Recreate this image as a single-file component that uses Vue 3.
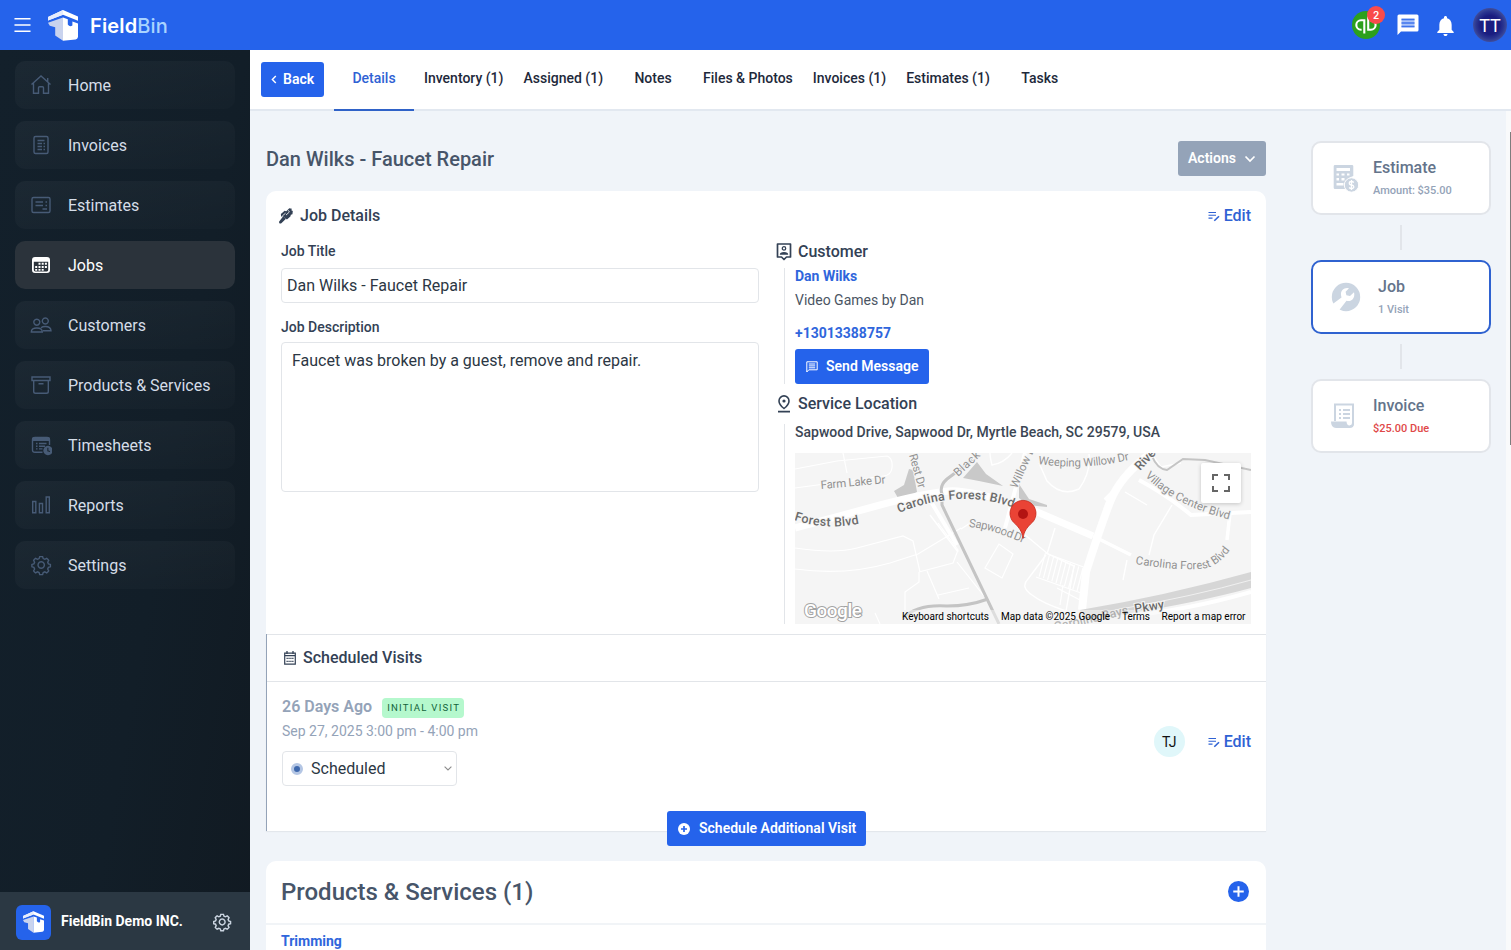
<template>
  <div class="app-shell">
    <header class="topbar">
      <svg class="menu-icon" viewBox="0 0 18 16"><path d="M0.5 1.5h17M0.5 8h17M0.5 14.5h17" /></svg>
      <svg class="brand-logo" viewBox="0 0 30 31">
        <path d="M0 7 15 0l15 6.500v4.200L15 4.800 0 10.500z" fill="#fff" />
        <path d="M0 7 15 0v4.800L0 10.500z" fill="#e6ecfc" />
        <path d="M0 12.800 15 7.500v23.300L7.200 25.500v-8.300L1.800 15.800z" fill="#c9d3ee" />
        <path d="M15 7.500 19.800 9.200v5.400q2 2.600 4.600.8V11.400L30 13.500v13.500q-.6 2.200-2.400 2.600L15 30.800z" fill="#fff" />
      </svg>
      <div class="brand-name"><span>Field</span><span class="brand-bin">Bin</span></div>
      <div class="top-actions">
        <div class="qb">
          <svg viewBox="0 0 28 28">
            <circle cx="14" cy="14" r="14" fill="#2ca01c" />
            <path d="M11.300 9.300H9a4.700 4.700 0 0 0 0 9.400h.6M12.300 8.200v14.300M16.200 5.500v13.200h2.700a4.700 4.700 0 0 0 0-9.400h-.6" fill="none" stroke="#fff" stroke-width="2.100" />
          </svg>
          <span class="qb-badge">2</span>
        </div>
        <svg class="chat" viewBox="0 0 22 22">
          <path d="M2 0.500h18q1.500 0 1.500 1.500v14q0 1.500-1.500 1.500H4L0.500 21V2q0-1.500 1.500-1.500z" fill="#fff" />
          <path d="M4.500 4.500h13v9h-13z" fill="#a9c2f8" />
          <path d="M4.500 5.500h13M4.500 9h13M4.500 12.500h13" stroke="#3f74ec" stroke-width="1.500" />
        </svg>
        <svg class="bell" viewBox="4 2.500 16 19.500"><path fill="#fff" d="M12 22c1.100 0 2-.9 2-2h-4c0 1.100.89 2 2 2zm6-6v-5c0-3.070-1.640-5.640-4.500-6.320V4c0-.83-.67-1.500-1.500-1.500s-1.500.67-1.500 1.500v.68C7.630 5.360 6 7.920 6 11v5l-2 2v1h16v-1l-2-2z" /></svg>
        <div class="user-avatar">TT</div>
      </div>
    </header>

    <div class="body">
      <aside class="sidebar">
        <nav class="nav">
          <a v-for="item in navItems" :key="item.label" class="nav-item" :class="{ active: item.active }">
            <svg class="nav-icon" viewBox="0 0 22 22">
              <path v-if="item.stroke" :d="item.stroke" class="line" />
              <path v-if="item.fill" :d="item.fill" class="solid" fill-rule="evenodd" />
            </svg>
            <span>{{ item.label }}</span>
          </a>
        </nav>
        <div class="org">
          <div class="org-logo">
            <svg viewBox="0 0 30 31">
              <path d="M0 7 15 0l15 6.500v4.200L15 4.800 0 10.500z" fill="#fff" />
              <path d="M0 7 15 0v4.800L0 10.500z" fill="#e6ecfc" />
              <path d="M0 12.800 15 7.500v23.300L7.200 25.500v-8.300L1.800 15.800z" fill="#c9d3ee" />
              <path d="M15 7.500 19.800 9.200v5.400q2 2.600 4.600.8V11.400L30 13.500v13.500q-.6 2.200-2.400 2.600L15 30.800z" fill="#fff" />
            </svg>
          </div>
          <span class="org-name">FieldBin Demo INC.</span>
          <svg class="org-gear" viewBox="0 0 22 22"><path :d="gear" /></svg>
        </div>
      </aside>

      <main class="main">
        <div class="tabbar">
          <button class="btn back">
            <svg viewBox="0 0 6 10"><path d="M5 1 1.200 5 5 9" /></svg>
            Back
          </button>
          <div class="tabs">
            <a v-for="(tab, i) in tabs" :key="tab" class="tab" :class="{ current: i === 0 }">{{ tab }}</a>
          </div>
        </div>

        <div class="content">
          <div class="column">
            <div class="title-row">
              <h1>Dan Wilks - Faucet Repair</h1>
              <button class="btn actions">
                Actions
                <svg viewBox="0 0 12 8"><path d="M1.500 1.500 6 6l4.500-4.500" /></svg>
              </button>
            </div>

            <section class="card job-card">
              <div class="job-head">
                <svg class="tools" viewBox="0 0 15 17">
                  <path d="M.8 16.500q-1-.6-.6-2L4.500 8.800l3 2.600-5 4.800q-.8.600-1.700.3z" />
                  <path d="M2 6.300 6 3l1.800.3L11 .3l2.800.5-.6 1.500 1.600.8-.4 3.400-1.700.6-.5 2-3.700 3.200-4.300-3.600L2.200 9z" />
                  <path d="M3.500 8.500 7 5.500M7.500 7.500 11 4.300M9.500 2.500l1.800 1.300" stroke="#fff" stroke-width=".9" fill="none" />
                </svg>
                <h2>Job Details</h2>
                <a class="edit">
                  <svg viewBox="0 0 12 11"><path d="M0.500 1.500h7.500M0.500 4.300h7.500M0.500 7.100h4" /><path d="M6.300 9.800 11 5.200" class="pen" /></svg>
                  Edit
                </a>
              </div>
              <div class="job-body">
                <div class="job-form">
                  <label>Job Title</label>
                  <div class="input">Dan Wilks - Faucet Repair</div>
                  <label class="desc-label">Job Description</label>
                  <div class="textarea">Faucet was broken by a guest, remove and repair.</div>
                </div>
                <div class="job-info">
                  <div class="info-head">
                    <svg viewBox="0 0 16 18">
                      <path d="M1.500 1h13v13H10.500L8 16.500 5.500 14h-4z" fill="none" stroke="#334155" stroke-width="1.700" stroke-linejoin="round" />
                      <circle cx="8" cy="5.400" r="1.700" fill="none" stroke="#334155" stroke-width="1.300" />
                      <path d="M3.800 11.800q0-2.800 4.200-2.800t4.200 2.800z" fill="#334155" />
                    </svg>
                    <h2>Customer</h2>
                  </div>
                  <div class="info-block customer">
                    <a class="link name">Dan Wilks</a>
                    <span class="company">Video Games by Dan</span>
                    <a class="link phone">+13013388757</a>
                    <button class="btn send">
                      <svg viewBox="0 0 12 12"><path d="M.8 11V.8h10.400v8H2.800z" /><path d="M2.800 3h6.400M2.800 4.900h6.400M2.800 6.800h6.400" /></svg>
                      Send Message
                    </button>
                  </div>
                  <div class="info-head location-head">
                    <svg viewBox="0 0 16 18">
                      <path d="M8 13.500Q3 9.500 3 5.900a5 5 0 0 1 10 0Q13 9.500 8 13.500zM2 16.600h12" fill="none" stroke="#334155" stroke-width="1.600" />
                      <circle cx="8" cy="6" r="1.600" fill="#334155" />
                    </svg>
                    <h2>Service Location</h2>
                  </div>
                  <div class="info-block location">
                    <span class="address">Sapwood Drive, Sapwood Dr, Myrtle Beach, SC 29579, USA</span>
                    <div class="map">
                      <svg viewBox="0 0 456 171">
                        <rect width="456" height="171" fill="#f5f5f5" />
                        <!-- parks and ponds -->
                        <g fill="#c9c9c9">
                          <path d="M99 38l10-6 5-16 4 1 4 22-7 4-12 2z" />
                          <path d="M168 25l14-16 9 12 17 12-24-5z" />
                          <path d="M224 31l10 15 18 6v2l-20-2-8-7z" />
                        </g>
                        <!-- streets -->
                        <g fill="none" stroke="#fff">
                          <path d="M0 16 42 8l50-5q6 2 5 12-1 7-8 8L0 35M48 0l4 20M0 95q40 6 62 0l46-12 10 5 7 31M0 116q50 7 95-6l28-9 43-26M124 119l34-9 5-13-20-27M132 118l12 28M143 142l31-7M124 119v10l-14 10v18M162 109l27 34M204 91l-14 24 17 10 11-24zM80 160l5 11" stroke-width="1.200" />
                          <path d="M135 62 163 99M166 76 180 67M217 0q-8 10-20 12-2-8-2-12M244 10l8 18q14 16 32 8 12-16 10-35M330 39l22 13M377 52l-18 30-5 20M356 0l10 14 20-4M332 107l-4 20M260 75l-8 26M229 81l24 20 26 12-8 45q-24-8-34-16-12-8-4-16l18-24" stroke-width="1.400" />
                          <path d="M0 75Q40 64 85 52T153 38 240 58l58 25" stroke-width="7" />
                          <path d="M298 83l38 19M432 87l3-27" stroke-width="3.500" />
                          <path d="M356 0Q325 23 315 49T291 119L287 157" stroke-width="8" />
                          <path d="M310 47 322 35M344 27Q372 42 396 62l60-3M330 163q60-5 126-24" stroke-width="4" />
                          <path d="M230 0 210 75M132 42l30 50" stroke-width="4" />
                        </g>
                        <g fill="none" stroke="#fff" stroke-width="1.200">
                          <path v-for="n in 10" :key="n" :d="`M${246 + n * 4.2} ${99 + n * 1.6}l-6 23`" />
                          <path d="M250 100l44 16M241 124l45 16M262 135l23 12M268 132l-3 20" />
                        </g>
                        <!-- railway and highway -->
                        <g fill="none" stroke="#c4c4c4">
                          <path d="M183 3 152 26q-8 7-5 15v11L204 171" stroke-width="3" />
                          <path d="M108 165q14-14 44-12 22 0 41-7" stroke-width="3" />
                          <path d="M357 3q5 13 15 14l16-11 22 1 46 10" stroke-width="2" />
                        </g>
                        <path d="M285 157Q370 143 456 119v16Q400 150 330 161l-42 6z" fill="#d6d6d6" />
                        <path d="M320 157Q400 143 456 127" fill="none" stroke="#f0f0f0" stroke-width="1" />
                        <defs>
                          <path id="st-forest" d="M-1 67Q33 78 67 70" />
                          <path id="st-carolina" d="M104 60Q166 34 222 56" />
                          <path id="st-sapwood" d="M174 74q20 1 59 18" />
                          <path id="st-weeping" d="M243 11q48 7 95-5" />
                          <path id="st-village" d="M350 23Q378 53 440 68" />
                          <path id="st-carolina2" d="M340 111q52 8 72 4 16-5 27-24" />
                        </defs>
                        <g class="road-label">
                          <text transform="translate(26 36) rotate(-5)" textLength="65">Farm Lake Dr</text>
                          <text transform="translate(114 2) rotate(74)" textLength="35">Rest Dr</text>
                          <text transform="translate(163 24) rotate(-43)" textLength="31">Black</text>
                          <text transform="translate(222 36) rotate(-66)">Willow Dr</text>
                          <text><textPath href="#st-sapwood" textLength="57">Sapwood Dr</textPath></text>
                          <text><textPath href="#st-weeping" textLength="92">Weeping Willow Dr</textPath></text>
                          <text><textPath href="#st-village" textLength="96">Village Center Blvd</textPath></text>
                          <text><textPath href="#st-carolina2" textLength="102">Carolina Forest Blvd</textPath></text>
                        </g>
                        <g class="road-label major">
                          <text><textPath href="#st-forest" textLength="66">Forest Blvd</textPath></text>
                          <text><textPath href="#st-carolina" textLength="117">Carolina Forest Blvd</textPath></text>
                          <text transform="translate(345 18) rotate(-47)">River</text>
                        </g>
                        <text x="9" y="163.500" class="google" textLength="58">Google</text>
                        <rect x="104" y="157" width="352" height="14" fill="#f5f5f5" opacity=".5" />
                        <g class="road-label major">
                          <text transform="translate(260 178) rotate(-13)" textLength="76" opacity=".45">Carolina Bays</text>
                          <text transform="translate(340 160) rotate(-9)" textLength="30">Pkwy</text>
                        </g>
                        <g class="map-foot">
                          <text x="107" y="167" textLength="87">Keyboard shortcuts</text>
                          <text x="206" y="167" textLength="109">Map data ©2025 Google</text>
                          <text x="327" y="167" textLength="28">Terms</text>
                          <text x="366.500" y="167" textLength="84">Report a map error</text>
                        </g>
                        <path d="M228 85.500c-1.200-8-4-10.500-7.500-14.500a13 13 0 1 1 15 0c-3.500 4-6.300 6.500-7.500 14.500z" fill="#ea4335" stroke="#c5291c" stroke-width=".8" />
                        <circle cx="228" cy="61" r="5" fill="#b31412" />
                      </svg>
                      <div class="fullscreen">
                        <svg viewBox="0 0 18 18"><path d="M1 6V1h5M12 1h5v5M17 12v5h-5M6 17H1v-5" /></svg>
                      </div>
                    </div>
                  </div>
                </div>
              </div>
            </section>

            <section class="visits">
              <div class="visits-head">
                <svg viewBox="0 0 12 14">
                  <path d="M.7 2.200h10.600v11H.7zM.7 4.600h10.600" fill="none" stroke="#334155" stroke-width="1.200" />
                  <path d="M3 0v3M9 0v3" stroke="#334155" stroke-width="1.300" />
                  <path d="M2.500 7.400h7M2.500 10.400h7" stroke="#334155" stroke-width="1.300" stroke-dasharray="1.300 .6" />
                </svg>
                <h2>Scheduled Visits</h2>
              </div>
              <div class="visit">
                <div class="visit-info">
                  <div class="visit-title">
                    <strong>26 Days Ago</strong>
                    <span class="badge">INITIAL VISIT</span>
                  </div>
                  <span class="visit-date">Sep 27, 2025 3:00 pm - 4:00 pm</span>
                  <div class="select">
                    <span class="dot"></span>
                    <span>Scheduled</span>
                    <svg viewBox="0 0 8 5"><path d="M.6.600 4 4 7.400.600" /></svg>
                  </div>
                </div>
                <div class="visit-side">
                  <div class="tech">TJ</div>
                  <a class="edit">
                    <svg viewBox="0 0 12 11"><path d="M0.500 1.500h7.500M0.500 4.300h7.500M0.500 7.100h4" /><path d="M6.300 9.800 11 5.200" class="pen" /></svg>
                    Edit
                  </a>
                </div>
              </div>
              <button class="btn schedule">
                <svg viewBox="0 0 12 12"><circle cx="6" cy="6" r="6" fill="#fff" /><path d="M6 3v6M3 6h6" stroke="#2563eb" stroke-width="1.700" /></svg>
                Schedule Additional Visit
              </button>
            </section>

            <section class="card products">
              <div class="products-head">
                <h3>Products &amp; Services (1)</h3>
                <svg viewBox="0 0 20 20"><circle cx="10" cy="10" r="10" fill="#2563eb" /><path d="M10 5v10M5 10h10" stroke="#fff" stroke-width="1.900" /></svg>
              </div>
              <a class="link product-link">Trimming</a>
            </section>
          </div>

          <div class="flow">
            <div class="step">
              <svg viewBox="0 0 30 30">
                <path fill="#cbd5e1" fill-rule="evenodd" d="M4 2h17q1.300 0 1.300 1.300V13q-7 2-7 8l1 5H4q-1.300 0-1.300-1.300V3.300Q2.700 2 4 2zM5.500 5v3h13.500V5zM5.500 10.500v2h2.500v-2zm5 0v2h3v-2zm5.500 0v2h2.500v-2zM5.500 15v2.500h2.500V15zm5 0v2.500h3V15zM5.500 20v2.500h7V20z" />
                <circle cx="20.500" cy="22" r="7.200" fill="#cbd5e1" stroke="#fff" stroke-width="1" />
                <path d="M22.800 19.500q-1-1-2.300-1-2.200 0-2.200 1.700t2.200 1.800 2.300 1.800-2.300 1.700q-1.500 0-2.400-1M20.500 17v10" fill="none" stroke="#fff" stroke-width="1.300" />
              </svg>
              <div class="step-text"><b>Estimate</b><small>Amount: $35.00</small></div>
            </div>
            <div class="link-line"></div>
            <div class="step job">
              <svg viewBox="0 0 30 30">
                <circle cx="15" cy="15" r="14.200" fill="#cbd5e1" />
                <path d="M-1 24 10.500 15.500Q8.500 9 13.500 6.500q2.500-1 4.500-.2L14.600 9.700l.8 3.600 3.600.8 4-3.800q1.300 5.700-3 8.200-2 1-4.500.3L6 31z" fill="#fff" />
              </svg>
              <div class="step-text"><b>Job</b><small>1 Visit</small></div>
            </div>
            <div class="link-line"></div>
            <div class="step">
              <svg viewBox="0 0 30 30">
                <path d="M4 20V3.500h18V22q0 3-3 3.500" fill="none" stroke="#cbd5e1" stroke-width="2" />
                <path d="M0 20.500h15.500q.3 4 3 4 3 0 3.500-3l1 1q0 4.500-4.500 4.500H5q-5 0-5-6.500z" fill="#cbd5e1" />
                <path d="M8 9h2M8 13h2M8 17h2M12 9h7M12 13h7M12 17h7" stroke="#cbd5e1" stroke-width="1.800" />
              </svg>
              <div class="step-text"><b>Invoice</b><small class="due">$25.00 Due</small></div>
            </div>
          </div>
          <div class="scroll-track"><div class="scroll-thumb"></div></div>
        </div>
      </main>
    </div>
  </div>
</template>

<script setup>
const gear =
  'M12.600 2.600l.6 2 1.600.7 1.900-1q1.200.8 2 2l-1 1.900.7 1.600 2 .6v2.400l-2 .6-.7 1.600 1 1.900q-.8 1.200-2 2l-1.900-1-1.600.7-.6 2h-2.900l-.6-2-1.600-.7-1.900 1q-1.200-.8-2-2l1-1.900-.7-1.600-2-.6v-2.400l2-.6.7-1.600-1-1.900q.8-1.200 2-2l1.900 1 1.600-.7.6-2zM11.200 7.800a3.200 3.200 0 1 0 .01 0z'

const navItems = [
  { label: 'Home', stroke: 'M1.500 10.500 11 2l9.500 8.500M3.500 9v10.200h5v-5.500q0-1 1-1h3q1 0 1 1v5.500h5V9M17.700 7.500V4' },
  { label: 'Invoices', stroke: 'M5.500 2.500h11q1.500 0 1.500 1.500v14q0 1.500-1.500 1.500h-11Q4 19.500 4 18V4q0-1.500 1.500-1.500zM7.500 6.500h7M7.500 9.500h4.500M13.500 9.500h1.500M7.500 12.500h4.500M13.500 12.500h1.500M7.500 15.500h4.500M13.500 15.500h1.500' },
  { label: 'Estimates', stroke: 'M3.500 3.500h15Q20 3.500 20 5v12q0 1.500-1.500 1.500h-15Q2 18.500 2 17V5q0-1.500 1.500-1.500zM5.500 8h7.500M5.500 11.500h7.500M15.500 8h1.500M15.500 11.500h1.500M12.500 15h4.500' },
  {
    label: 'Jobs',
    active: true,
    fill: 'M5 3h12q3 0 3 3v10q0 3-3 3H5q-3 0-3-3V6q0-3 3-3zM3.800 7.800V16q0 1.400 1.400 1.400h11.600q1.400 0 1.400-1.400V7.800zM8.500 8.800h2v2h-2zm3.200 0h2v2h-2zm3.200 0h2v2h-2zM5.200 12h2v2h-2zm3.300 0h2v2h-2zm3.200 0h2v2h-2zm3.200 0h2v2h-2zM5.200 15h2v1.800h-2zm3.300 0h2v1.800h-2zm3.200 0h2v1.800h-2z'
  },
  { label: 'Customers', stroke: 'M6.800 5.200a3 3 0 1 0 .01 0zM15.300 4a3 3 0 1 0 .01 0zM1.300 18q0-4 5.500-4t5.500 4zM11 13.800q1.500-1.300 4.300-1.300 5.500 0 5.700 4.300h-8' },
  { label: 'Products & Services', stroke: 'M2 3h18v3.500H2zM3.700 6.500v11q0 1.800 1.800 1.800h11q1.800 0 1.800-1.800v-11M8.500 9.800h5' },
  {
    label: 'Timesheets',
    stroke: 'M12.500 18.300H5Q2.500 18.300 2.500 16V6Q2.500 3.500 5 3.500h12Q19.500 3.500 19.500 6v5M6 9.500h1.500M9 9.500h7.500M6 12.200h1.500M9 12.200h6M6 14.900h1.500M9 14.900h3.500',
    fill: 'M2 7V5q0-2 2.500-2h13Q20 3 20 5v2zM18 11.800a4.700 4.700 0 1 1-.01 0zM17.300 13.800v3.400l2.600.8.2-1-1.700-.6v-2.600z'
  },
  { label: 'Reports', stroke: 'M2.700 7.500h3.100v11.200H2.700zM9.400 9.500h3.100v9.200H9.400zM16.200 3h3.100v15.700h-3.100z' },
  { label: 'Settings', stroke: gear }
]

const tabs = ['Details', 'Inventory (1)', 'Assigned (1)', 'Notes', 'Files & Photos', 'Invoices (1)', 'Estimates (1)', 'Tasks']
</script>

<style>
body {
  margin: 0;
  overflow: hidden;
}
</style>

<style scoped>
* {
  box-sizing: border-box;
}

.app-shell {
  height: 950px;
  display: flex;
  flex-direction: column;
  font-family: Roboto, "Liberation Sans", sans-serif;
  color: #334155;
  background: #f0f4f9;
}

svg {
  display: block;
  flex: none;
}

h1, h2, h3 {
  margin: 0;
  font-weight: 500;
}

.topbar {
  height: 50px;
  flex: none;
  display: flex;
  align-items: center;
  padding: 0 5px 0 14px;
  background: #2563eb;
}

.menu-icon {
  width: 17px;
  height: 16px;
  fill: none;
  stroke: #fff;
  stroke-width: 1.6;
}

.brand-logo {
  width: 30px;
  height: 31px;
  margin-left: 17px;
}

.brand-name {
  margin-left: 12px;
  padding-top: 2px;
  font: 600 20px/30px Inter, sans-serif;
  letter-spacing: 0.15px;
  color: #fff;
}

.brand-bin {
  font-weight: 500;
  color: #a9d3ff;
}

.top-actions {
  margin-left: auto;
  display: flex;
  align-items: center;
}

.qb {
  position: relative;
  margin-right: 17px;
}

.qb svg {
  width: 28px;
  height: 28px;
}

.qb-badge {
  position: absolute;
  top: -5px;
  right: -5px;
  width: 18px;
  height: 18px;
  border-radius: 50%;
  background: #f94b4b;
  color: #fff;
  font: 600 10px/18px Inter, sans-serif;
  text-align: center;
}

.chat {
  width: 22px;
  height: 22px;
  margin-right: 18px;
}

.bell {
  width: 17px;
  height: 20px;
  margin: 1px 19px 0 0;
}

.user-avatar {
  width: 34px;
  height: 34px;
  margin-right: -1px;
  border-radius: 50%;
  background: radial-gradient(circle closest-side, #1a1d80 55%, #2a3590 80%, #3f4d9c 100%);
  color: #fff;
  font-size: 18px;
  line-height: 35px;
  text-align: center;
}

.body {
  flex: 1;
  min-height: 0;
  display: flex;
}

.sidebar {
  width: 250px;
  flex: none;
  display: flex;
  flex-direction: column;
  justify-content: space-between;
  background: linear-gradient(100deg, #13202b 0%, #121e28 60%, #111a22 100%);
}

.nav {
  padding: 11px 15px 0;
  display: flex;
  flex-direction: column;
  gap: 12px;
}

.nav-item {
  height: 48px;
  display: flex;
  align-items: center;
  gap: 16px;
  padding-left: 15px;
  border-radius: 10px;
  background: linear-gradient(170deg, rgba(255, 255, 255, 0.038), rgba(255, 255, 255, 0.012));
  color: #d5dde8;
  font-size: 16px;
}

.nav-item.active {
  background: #2b333b;
  color: #fff;
}

.nav-icon {
  width: 22px;
  height: 22px;
}

.nav-icon .line {
  fill: none;
  stroke: #475b76;
  stroke-width: 1.4;
}

.nav-icon .solid {
  fill: #475b76;
}

.active .solid {
  fill: #fff;
}

.org {
  height: 58px;
  display: flex;
  align-items: center;
  padding: 2px 18px 0 16px;
  background: #2b3843;
  color: #fff;
}

.org-logo {
  width: 35px;
  height: 35px;
  display: flex;
  align-items: center;
  justify-content: center;
  border-radius: 6px;
  background: #2563eb;
}

.org-logo svg {
  width: 21px;
  height: 22px;
}

.org-name {
  margin: 0 0 2px 10px;
  font-size: 14px;
  font-weight: 700;
}

.org-gear {
  width: 20px;
  height: 20px;
  margin-left: auto;
  fill: none;
  stroke: #cbd5e1;
  stroke-width: 1.6;
}

.main {
  flex: 1;
  min-width: 0;
  display: flex;
  flex-direction: column;
}

.tabbar {
  height: 61px;
  flex: none;
  display: flex;
  align-items: flex-start;
  background: #fff;
  border-bottom: 2px solid #e2e8f0;
}

.btn {
  height: 35px;
  display: flex;
  align-items: center;
  border: 0;
  border-radius: 3px;
  background: #2563eb;
  color: #fff;
  font: 600 14px Roboto, "Liberation Sans", sans-serif;
  white-space: nowrap;
}

.back {
  width: 63px;
  margin: 12px 10px 0 11px;
  padding: 0 0 2px 10px;
  gap: 6px;
}

.back svg {
  width: 6px;
  height: 9px;
  margin-top: 1px;
  fill: none;
  stroke: #fff;
  stroke-width: 1.6;
}

.tabs {
  display: flex;
}

.tab {
  min-width: 80px;
  height: 61px;
  padding: 0 10px;
  line-height: 56px;
  font-size: 14px;
  font-weight: 500;
  text-align: center;
  color: #1e293b;
  white-space: nowrap;
}

.tab.current {
  color: #2f62d4;
  border-bottom: 2px solid #2f62c8;
}

.content {
  flex: 1;
  min-height: 0;
  display: flex;
  align-items: flex-start;
  overflow: hidden;
}

.column {
  width: 1000px;
  flex: none;
  margin: 30px 0 0 16px;
}

.title-row {
  height: 35px;
  display: flex;
  align-items: center;
  justify-content: space-between;
  margin-bottom: 15px;
}

h1 {
  font-size: 20px;
  color: #475569;
}

.actions {
  width: 88px;
  padding: 0 10px 2px;
  justify-content: space-between;
  background: #94a3b8;
}

.actions svg {
  width: 12px;
  height: 8px;
  margin-top: 3px;
  fill: none;
  stroke: #fff;
  stroke-width: 1.7;
}

.card {
  background: #fff;
  border-radius: 10px 10px 0 0;
}

.job-card {
  height: 443px;
}

.job-head {
  height: 49px;
  display: flex;
  align-items: center;
  padding: 0 15px 0 13px;
}

h2 {
  font-size: 16px;
  line-height: 22px;
}

.tools {
  width: 14px;
  height: 16px;
  margin: 1px 7px 0 0;
  fill: #334155;
}

.edit {
  margin-left: auto;
  display: flex;
  align-items: center;
  gap: 4px;
  color: #2f62d4;
  font-size: 16px;
  font-weight: 500;
}

.edit svg {
  width: 12px;
  height: 11px;
  margin-top: 2px;
  fill: none;
  stroke: #2f62d4;
  stroke-width: 1.1;
}

.edit .pen {
  stroke-width: 1.6;
}

.job-body {
  display: flex;
  padding-left: 15px;
}

.job-form {
  width: 478px;
  margin-right: 17px;
}

.job-form label {
  display: block;
  height: 22px;
  line-height: 22px;
  font-size: 14px;
  font-weight: 500;
}

.input {
  height: 35px;
  margin-top: 6px;
  padding-left: 5px;
  line-height: 33px;
  border: 1px solid #e2e5e9;
  border-radius: 4px;
  font-size: 16px;
  color: #2c3744;
}

.desc-label {
  margin-top: 13px;
}

.textarea {
  height: 150px;
  margin-top: 4px;
  padding: 7px 10px;
  line-height: 22px;
  border: 1px solid #e2e5e9;
  border-radius: 4px;
  font-size: 16px;
  color: #2c3744;
}

.info-head {
  display: flex;
  align-items: center;
  height: 22px;
  padding-top: 2px;
}

.info-head svg {
  width: 16px;
  height: 18px;
  margin-right: 6px;
}

.info-block {
  display: flex;
  flex-direction: column;
  align-items: flex-start;
  margin-left: 8px;
  padding-left: 10px;
  border-left: 1px solid #e2e5e9;
  font-size: 14px;
}

.customer {
  height: 116px;
  margin-top: 6px;
}

.link {
  color: #2f66dc;
  font-size: 14px;
  font-weight: 700;
}

.name {
  line-height: 16px;
}

.company {
  margin-top: 6px;
  line-height: 20px;
  color: #4b5563;
}

.phone {
  margin: 13px 0 6px;
  line-height: 20px;
}

.send {
  width: 134px;
  padding: 0 0 2px 11px;
  gap: 8px;
}

.send svg {
  width: 12px;
  height: 12px;
  margin-top: 2px;
  fill: none;
  stroke: #fff;
  stroke-width: 1;
}

.location-head {
  margin-top: 8px;
}

.location {
  height: 200px;
  margin-top: 10px;
}

.address {
  line-height: 16px;
  font-weight: 500;
  color: #3b4654;
}

.map {
  position: relative;
  width: 456px;
  height: 171px;
  margin-top: 13px;
  overflow: hidden;
}

.map > svg {
  width: 456px;
  height: 171px;
}

.road-label text {
  font-size: 11.5px;
  fill: #929292;
  stroke: #f5f5f5;
  stroke-width: 2px;
  paint-order: stroke;
}

.road-label.major text {
  font-size: 12.5px;
  font-weight: 500;
  fill: #6b6b6b;
}

.google {
  font: 500 19px Roboto, sans-serif;
  fill: #fff;
  stroke: #a3a3a3;
  stroke-width: 2px;
  paint-order: stroke;
}

.map-foot text {
  font-size: 10px;
  fill: #000;
}

.fullscreen {
  position: absolute;
  top: 10px;
  right: 10px;
  width: 40px;
  height: 40px;
  display: flex;
  align-items: center;
  justify-content: center;
  background: #fff;
  border-radius: 2px;
  box-shadow: 0 1px 4px rgba(0, 0, 0, 0.2);
}

.fullscreen svg {
  width: 18px;
  height: 18px;
  fill: none;
  stroke: #666;
  stroke-width: 2;
}

.visits {
  height: 197px;
  background: #fff;
  border-left: 1px solid #94a3b8;
  box-shadow: 0 1px 1px rgba(0, 0, 0, 0.05);
}

.visits-head {
  height: 48px;
  display: flex;
  align-items: center;
  padding: 0 17px;
  border-top: 1px solid #e2e5e9;
  border-bottom: 1px solid #e2e5e9;
}

.visits-head svg {
  width: 12px;
  height: 14px;
  margin-right: 7px;
}

.visit {
  height: 119px;
  display: flex;
  justify-content: space-between;
  padding: 12px 15px 0;
}

.visit-title {
  display: flex;
  align-items: center;
  height: 24px;
}

.visit-title strong {
  font-size: 16px;
  font-weight: 600;
  color: #94a3b8;
}

.badge {
  height: 20px;
  margin: 4px 0 0 10px;
  padding: 0 4px 0 5px;
  border-radius: 4px;
  background: #b5f8cd;
  color: #12633a;
  font-size: 9.6px;
  line-height: 20px;
  letter-spacing: 1.25px;
}

.visit-date {
  display: block;
  margin-top: 3px;
  line-height: 20px;
  font-size: 14px;
  color: #94a3b8;
}

.select {
  width: 175px;
  height: 35px;
  margin-top: 10px;
  padding: 0 4px 0 8px;
  display: flex;
  align-items: center;
  border: 1px solid #e2e5e9;
  border-radius: 4px;
  font-size: 16px;
  color: #2c3744;
}

.dot {
  width: 12px;
  height: 12px;
  margin-right: 8px;
  border: 3px solid #b4c6e4;
  border-radius: 50%;
  background: #3e68ad;
}

.select svg {
  width: 8px;
  height: 5px;
  margin-left: auto;
  fill: none;
  stroke: #8c8c8c;
  stroke-width: 1.1;
}

.visit-side {
  display: flex;
  align-items: center;
  align-self: flex-start;
  height: 31px;
  margin-top: 32px;
}

.tech {
  width: 31px;
  height: 31px;
  margin-right: 23px;
  border-radius: 50%;
  background: #e0f7fa;
  color: #111;
  font-size: 14px;
  line-height: 32px;
  text-align: center;
}

.schedule {
  width: 199px;
  margin: 10px auto 0;
  padding: 0 0 1px 11px;
  gap: 9px;
}

.schedule svg {
  width: 12px;
  height: 12px;
  margin-top: 1px;
}

.products {
  height: 120px;
  margin-top: 30px;
}

.products-head {
  height: 64px;
  display: flex;
  align-items: center;
  justify-content: space-between;
  padding: 0 17px 0 15px;
  border-bottom: 2px solid #f1f4f7;
}

.products-head svg {
  width: 21px;
  height: 21px;
  margin-bottom: 2px;
}

h3 {
  font-size: 24px;
  color: #475569;
}

.product-link {
  display: block;
  margin: 6px 15px;
  line-height: 20px;
}

.flow {
  width: 180px;
  flex: none;
  margin: 30px 0 0 45px;
  display: flex;
  flex-direction: column;
  align-items: center;
}

.step {
  width: 180px;
  height: 74px;
  display: flex;
  align-items: center;
  padding-left: 18px;
  background: #fff;
  border: 2px solid #e2e5ea;
  border-radius: 10px;
}

.step.job {
  border-color: #2f62d0;
}

.step > svg {
  width: 30px;
  height: 30px;
  margin-right: 12px;
}

.job > svg {
  margin-right: 17px;
}

.step-text {
  display: flex;
  flex-direction: column;
}

.step-text b {
  font-size: 16px;
  font-weight: 500;
  line-height: 24px;
  color: #64748b;
}

.step-text small {
  margin: 2px 0 1px;
  font-size: 11px;
  font-weight: 500;
  line-height: 18px;
  color: #94a3b8;
}

.step-text .due {
  color: #e04848;
}

.link-line {
  width: 2px;
  height: 25px;
  margin: 10px 0;
  background: #e2e5ea;
}

.scroll-track {
  width: 5px;
  height: 100%;
  margin-left: auto;
  padding-top: 21px;
  background: #f9fafb;
}

.scroll-thumb {
  width: 1px;
  height: 313px;
  margin-left: 4px;
  background: #7d7d7d;
}
</style>
